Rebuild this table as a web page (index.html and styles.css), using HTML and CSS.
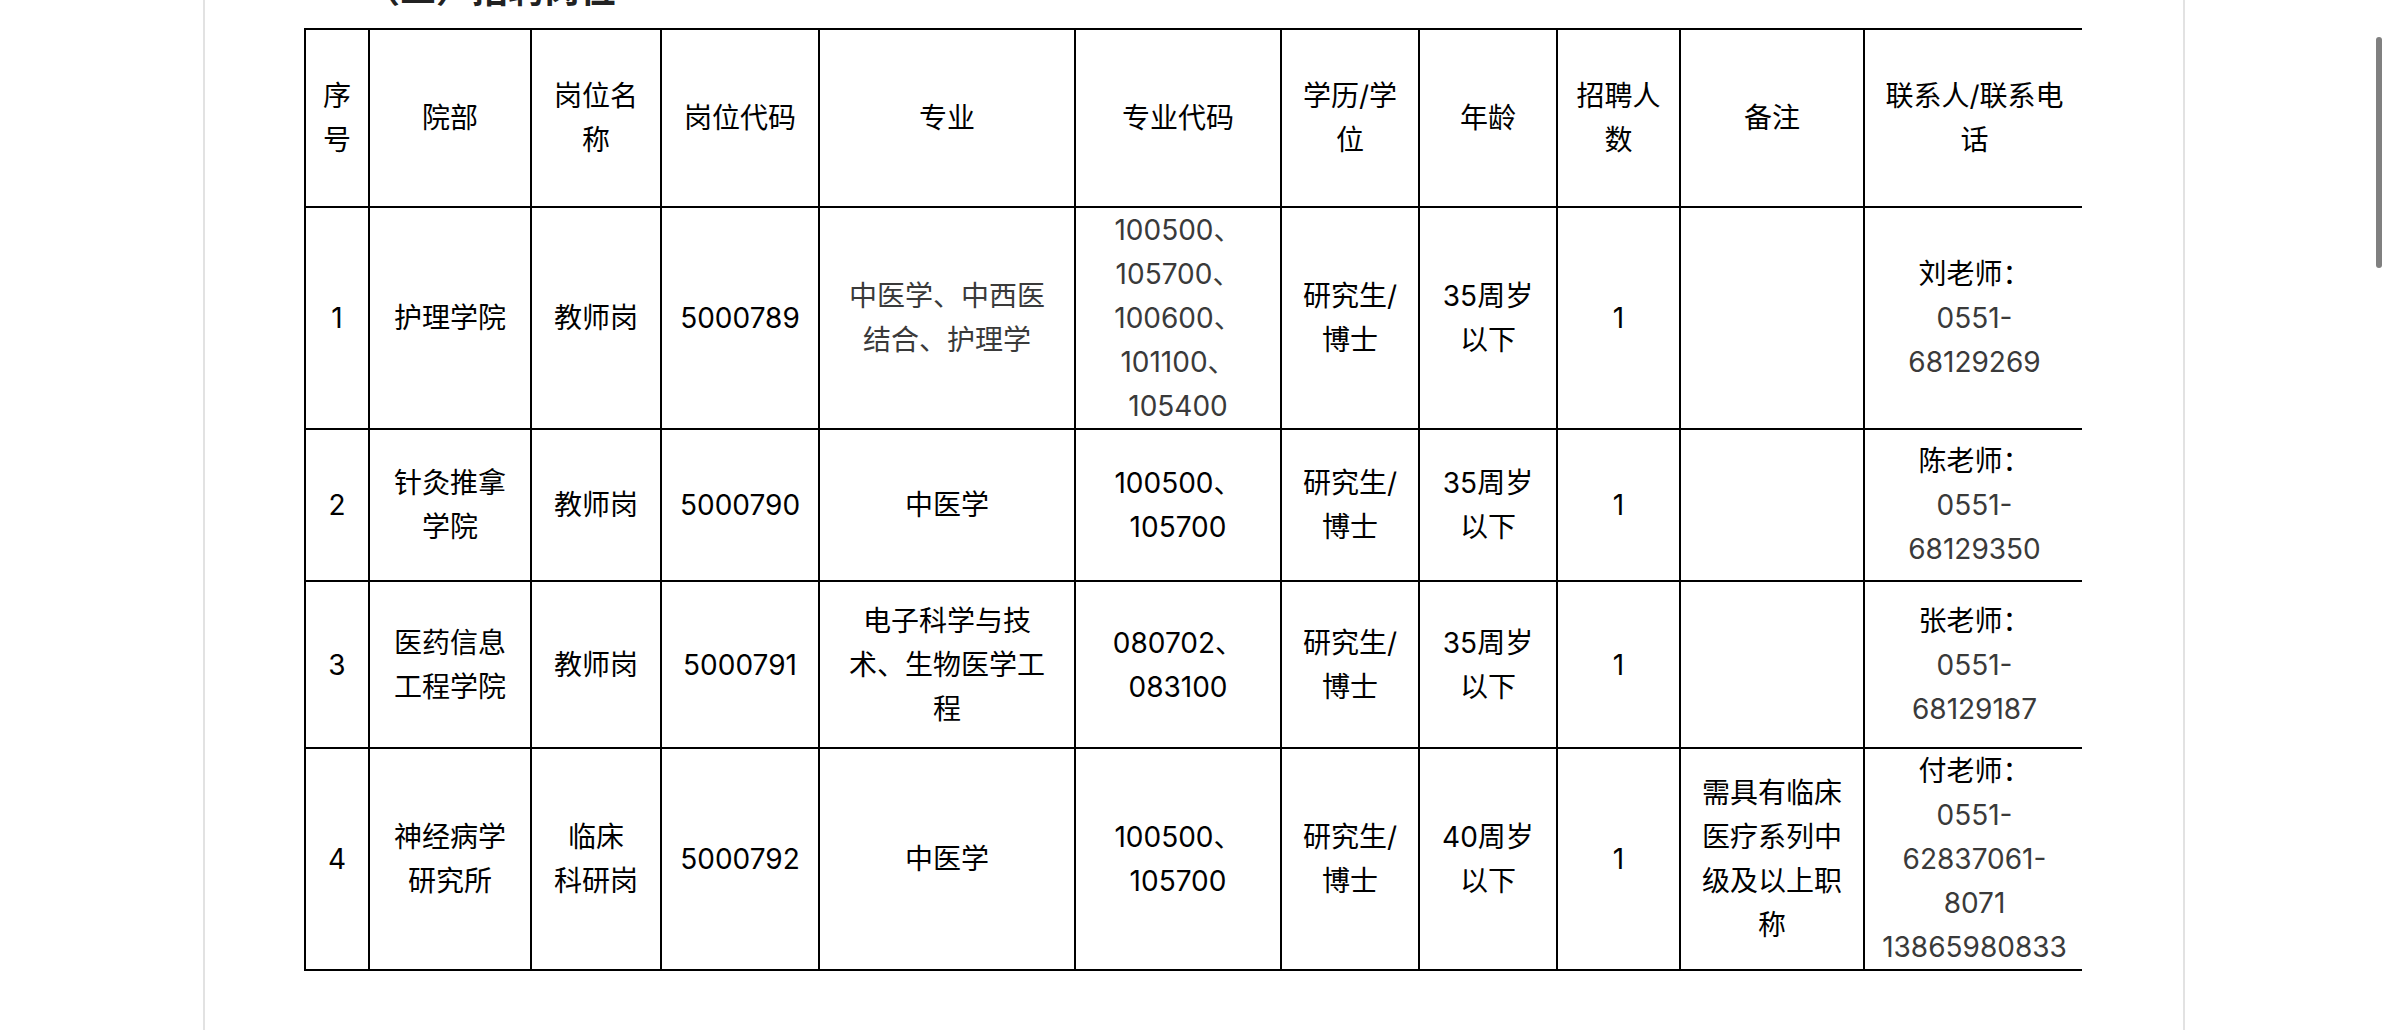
FILE: index.html
```html
<!DOCTYPE html>
<html lang="zh-CN">
<head>
<meta charset="utf-8">
<title>招聘岗位</title>
<link rel="stylesheet" href="styles.css">
</head>
<body>
<div class="page">
  <h3 class="section-title">（二）招聘岗位</h3>
  <div class="table-wrap">
    <table class="jobs">
      <colgroup>
        <col class="c1"><col class="c2"><col class="c3"><col class="c4"><col class="c5"><col class="c6"><col class="c7"><col class="c8"><col class="c9"><col class="c10"><col class="c11">
      </colgroup>
      <tr class="r-head">
        <td class="narrow">序号</td>
        <td>院部</td>
        <td>岗位名称</td>
        <td>岗位代码</td>
        <td>专业</td>
        <td>专业代码</td>
        <td>学历/学位</td>
        <td>年龄</td>
        <td>招聘人数</td>
        <td>备注</td>
        <td class="contact">联系人/联系电话</td>
      </tr>
      <tr class="r1">
        <td class="narrow">1</td>
        <td>护理学院</td>
        <td>教师岗</td>
        <td>5000789</td>
        <td class="gray">中医学、中西医结合、护理学</td>
        <td class="gray">100500、105700、100600、101100、105400</td>
        <td>研究生/博士</td>
        <td>35周岁以下</td>
        <td>1</td>
        <td></td>
        <td class="contact">刘老师：<br><span class="gray">0551-<br>68129269</span></td>
      </tr>
      <tr class="r2">
        <td class="narrow">2</td>
        <td>针灸推拿学院</td>
        <td>教师岗</td>
        <td>5000790</td>
        <td>中医学</td>
        <td>100500、105700</td>
        <td>研究生/博士</td>
        <td>35周岁以下</td>
        <td>1</td>
        <td></td>
        <td class="contact">陈老师：<br><span class="gray">0551-<br>68129350</span></td>
      </tr>
      <tr class="r3">
        <td class="narrow">3</td>
        <td>医药信息工程学院</td>
        <td>教师岗</td>
        <td>5000791</td>
        <td>电子科学与技术、生物医学工程</td>
        <td>080702、083100</td>
        <td>研究生/博士</td>
        <td>35周岁以下</td>
        <td>1</td>
        <td></td>
        <td class="contact">张老师：<br><span class="gray">0551-<br>68129187</span></td>
      </tr>
      <tr class="r4">
        <td class="narrow">4</td>
        <td>神经病学研究所</td>
        <td>临床<br>科研岗</td>
        <td>5000792</td>
        <td>中医学</td>
        <td>100500、105700</td>
        <td>研究生/博士</td>
        <td>40周岁以下</td>
        <td>1</td>
        <td>需具有临床医疗系列中级及以上职称</td>
        <td class="contact">付老师：<br><span class="gray">0551-<br>62837061-<br>8071<br>13865980833</span></td>
      </tr>
    </table>
  </div>
</div>
<div class="scroll-thumb"></div>
</body>
</html>
```

FILE: styles.css
```css
html, body {
  margin: 0;
  padding: 0;
  background: #ffffff;
  overflow: hidden;
  height: 100%;
}

body {
  font-family: Inter, "Noto Sans CJK SC", sans-serif;
  color: #000;
}

.page {
  margin: 0 auto;
  border-left: 2px solid #e2e2e2;
  border-right: 2px solid #e2e2e2;
  min-height: 1100px;
  padding-left: 99px;
  box-sizing: content-box;
  width: 1879px;
}

.section-title {
  margin: -33px 0 21px 0;
  padding-left: 60px;
  font-family: "Noto Sans CJK SC", sans-serif;
  font-size: 36px;
  line-height: 40px;
  font-weight: 700;
  color: #222;
}

.table-wrap {
  width: 1778px;
  overflow: hidden;
}

.jobs {
  border-collapse: collapse;
  table-layout: fixed;
  width: 1780px;
  font-size: 28px;
  line-height: 44px;
}

.jobs td {
  border: 2px solid #000;
  padding: 0 18px;
  text-align: center;
  vertical-align: middle;
  word-break: normal;
}

.jobs td.narrow { padding: 0 4px; }
.jobs td.contact { padding: 0 12px; }

.c1 { width: 64px; }
.c2 { width: 162px; }
.c3 { width: 130px; }
.c4 { width: 158px; }
.c5 { width: 256px; }
.c6 { width: 206px; }
.c7 { width: 138px; }
.c8 { width: 138px; }
.c9 { width: 123px; }
.c10 { width: 184px; }
.c11 { width: 221px; }

.r-head { height: 178px; }
.r1 { height: 221px; }
.r2 { height: 152px; }
.r3 { height: 167px; }
.r4 { height: 221px; }

.gray { color: #3a3a3a; }

.scroll-thumb {
  position: fixed;
  top: 37px;
  left: 2376px;
  width: 6px;
  height: 231px;
  border-radius: 3px;
  background: #808080;
}
```
